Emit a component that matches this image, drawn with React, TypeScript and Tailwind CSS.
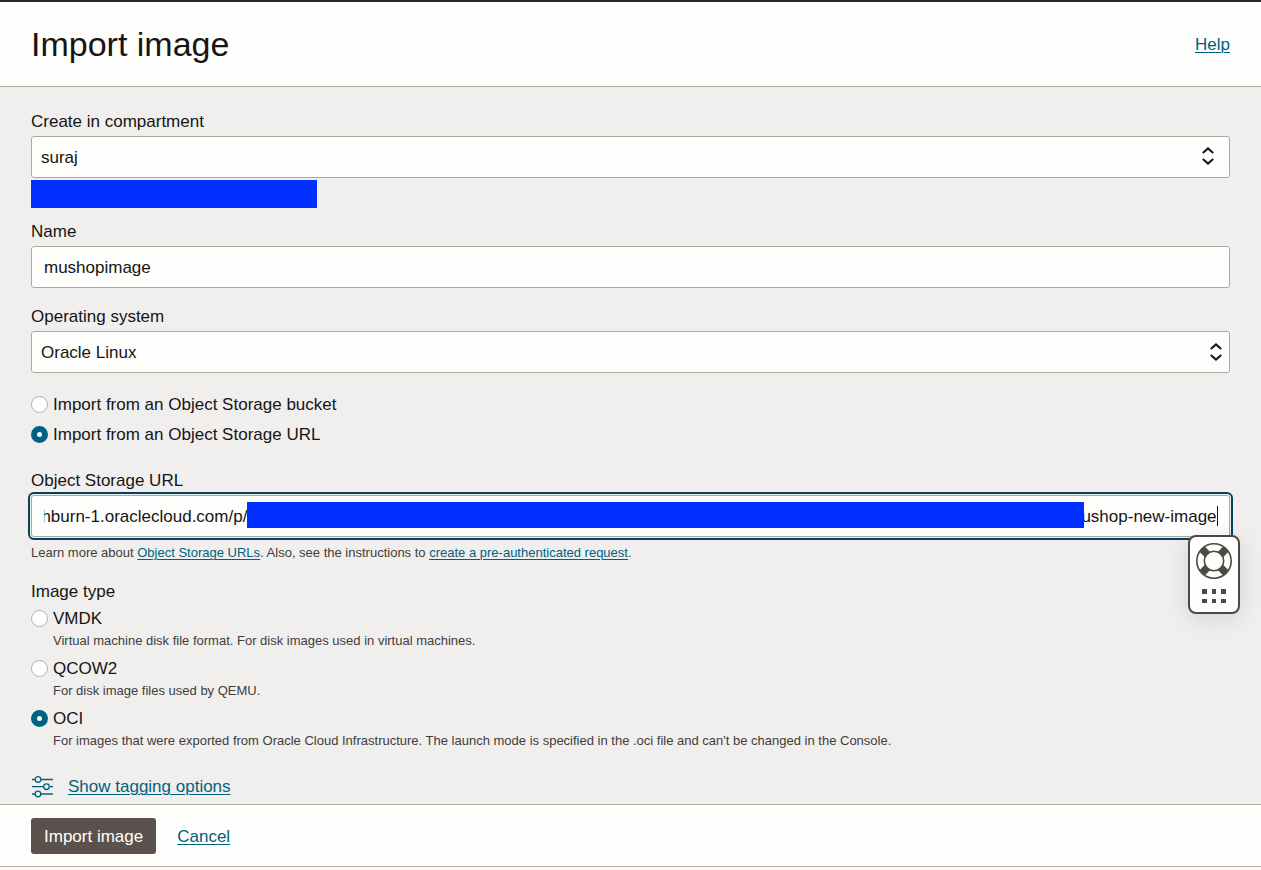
import { useLayoutEffect, useRef, useState } from "react";
import type { ReactNode } from "react";

const label = "block text-[17px] leading-[22px]";
const box =
  "block h-[42px] w-full rounded-[3px] border border-[#aea8a3] bg-[#fefefc] pt-[2px] text-[17px] text-[#161513] outline-none";
const link = "text-[#00617f] underline decoration-1 underline-offset-2";

const OBJECT_URL =
  "https://objectstorage.us-ashburn-1.oraclecloud.com/p/000xxxxxxxxxxxxxxxxxxxxxxxxxxxxxxxxxxxxxxxxxxxxxxxxxxxxxxxxxxxxxxxxxxxxxx/n/xxxxxxxxxx/b/images/o/mushop-new-image";

function Chevrons({ className }: { className: string }) {
  return (
    <svg
      className={`pointer-events-none absolute ${className}`}
      viewBox="0 0 12 18"
      fill="none"
      stroke="#161513"
      strokeWidth="2"
      aria-hidden="true"
    >
      <path d="M0.8 6 L6 1.4 L11.2 6 M0.8 12 L6 16.6 L11.2 12" />
    </svg>
  );
}

type RadioProps = {
  name: string;
  text: string;
  checked: boolean;
  onSelect: () => void;
  hint?: ReactNode;
};

function Radio({ name, text, checked, onSelect, hint }: RadioProps) {
  return (
    <div>
      <label className="flex w-fit items-start gap-[5px] text-[17px] leading-[22px]">
        <input
          type="radio"
          name={name}
          checked={checked}
          onChange={onSelect}
          className="mt-[2px] size-[17px] shrink-0 appearance-none rounded-full border border-[#b5afab] bg-[#fefefc] checked:border-[6px] checked:border-[#006182]"
        />
        {text}
      </label>
      {hint && <p className="ml-[22px] text-[13px] leading-[22px] text-[#403d3a]">{hint}</p>}
    </div>
  );
}

function SupportWidget() {
  return (
    <button
      type="button"
      aria-label="Support"
      className="absolute top-10 -right-[10px] flex h-[79px] w-[52px] flex-col items-center rounded-lg border-2 border-[#4d4845] bg-[#fefefc] pt-[6px] shadow-[0_4px_24px_rgba(0,0,0,0.12)]"
    >
      <svg width="36" height="36" viewBox="0 0 36 36" fill="none" stroke="#4d4845" aria-hidden="true">
        <path
          d="M11.3 11.3L6.2 6.2M24.7 11.3L29.8 6.2M11.3 24.7L6.2 29.8M24.7 24.7L29.8 29.8"
          strokeWidth="7.5"
        />
        <circle cx="18" cy="18" r="17.2" strokeWidth="1.6" />
        <circle cx="18" cy="18" r="9.7" strokeWidth="1.6" fill="#fefefc" />
      </svg>
      <svg className="mt-[10px]" width="24" height="15" viewBox="0 0 24 15" fill="#4d4845" aria-hidden="true">
        <path d="M0 0h5v5H0zM10 0h4v5h-4zM19 0h5v5h-5zM0 10h5v4H0zM10 10h4v4h-4zM19 10h5v4h-5z" />
      </svg>
    </button>
  );
}

export default function App() {
  const [source, setSource] = useState("url");
  const [imageType, setImageType] = useState("oci");
  const [name, setName] = useState("mushopimage");
  const [url, setUrl] = useState(OBJECT_URL);
  const urlRef = useRef<HTMLInputElement>(null);

  useLayoutEffect(() => {
    const el = urlRef.current;
    if (el) el.scrollLeft = el.scrollWidth;
  }, []);

  return (
    <div className="flex min-h-screen flex-col border-t-2 border-[#2c2624] bg-[#fcf9f7] font-['Liberation_Sans',Arial,sans-serif] text-[#161513]">
      <header className="flex items-center justify-between border-b border-[#b3ada6] bg-[#fefefc] px-[31px] py-[22px]">
        <h1 className="text-[34px] leading-10">Import image</h1>
        <a href="#help" className={`pt-[2px] text-[17px] leading-[22px] ${link}`}>
          Help
        </a>
      </header>

      <main className="flex-1 bg-[#f1efee] px-[31px] pt-6 pb-[6px]">
        <label htmlFor="compartment" className={label}>
          Create in compartment
        </label>
        <div className="relative mt-[3px]">
          <select id="compartment" className={`${box} appearance-none pl-[9px]`}>
            <option>suraj</option>
          </select>
          <Chevrons className="top-[11px] right-4 h-[18px] w-3" />
        </div>
        <div className="mt-[2px] h-7 w-[286px] bg-[#002fff]" />

        <label htmlFor="name" className={`${label} mt-[13px]`}>
          Name
        </label>
        <input
          id="name"
          type="text"
          value={name}
          onChange={(e) => setName(e.target.value)}
          className={`${box} mt-[3px] px-3`}
        />

        <label htmlFor="os" className={`${label} mt-[18px]`}>
          Operating system
        </label>
        <div className="relative mt-[3px]">
          <select id="os" className={`${box} appearance-none pl-[9px]`}>
            <option>Oracle Linux</option>
          </select>
          <Chevrons className="top-3 right-2 h-[18px] w-3" />
        </div>

        <div className="mt-[21px] flex flex-col gap-2">
          <Radio
            name="source"
            text="Import from an Object Storage bucket"
            checked={source === "bucket"}
            onSelect={() => setSource("bucket")}
          />
          <Radio
            name="source"
            text="Import from an Object Storage URL"
            checked={source === "url"}
            onSelect={() => setSource("url")}
          />
        </div>

        <label htmlFor="url" className={`${label} mt-6`}>
          Object Storage URL
        </label>
        <div className="relative mt-[3px] rounded-[3px] outline-2 outline-offset-1 outline-[#00445c]">
          <input
            id="url"
            ref={urlRef}
            type="text"
            value={url}
            onChange={(e) => setUrl(e.target.value)}
            className={`${box} px-3`}
          />
          <div className="absolute top-[7px] right-[146px] left-[216px] h-[26px] bg-[#002fff]" />
          <div className="absolute top-[11px] right-3 h-5 w-px bg-[#161513]" />
          <SupportWidget />
        </div>
        <p className="mt-[5px] text-[13px] leading-[22px] text-[#403d3a]">
          Learn more about{" "}
          <a href="#urls" className={link}>
            Object Storage URLs
          </a>
          . Also, see the instructions to{" "}
          <a href="#request" className={link}>
            create a pre-authenticated request
          </a>
          .
        </p>

        <fieldset className="mt-[17px]">
          <legend className="text-[17px] leading-[22px]">Image type</legend>
          <div className="mt-[5px] flex flex-col gap-[6px]">
            <Radio
              name="imageType"
              text="VMDK"
              checked={imageType === "vmdk"}
              onSelect={() => setImageType("vmdk")}
              hint="Virtual machine disk file format. For disk images used in virtual machines."
            />
            <Radio
              name="imageType"
              text="QCOW2"
              checked={imageType === "qcow2"}
              onSelect={() => setImageType("qcow2")}
              hint="For disk image files used by QEMU."
            />
            <Radio
              name="imageType"
              text="OCI"
              checked={imageType === "oci"}
              onSelect={() => setImageType("oci")}
              hint="For images that were exported from Oracle Cloud Infrastructure. The launch mode is specified in the .oci file and can't be changed in the Console."
            />
          </div>
        </fieldset>

        <div className="mt-6 flex h-[22px] items-center gap-[15px]">
          <svg width="22" height="22" viewBox="0 0 22 22" fill="none" stroke="#00617f" strokeWidth="1.3" aria-hidden="true">
            <path d="M1 3.5h3M10 3.5h12M1 10.7h11M19 10.7h3M1 18h3M10 18h12" />
            <circle cx="7" cy="3.5" r="2.8" />
            <circle cx="15.5" cy="10.7" r="2.8" />
            <circle cx="7" cy="18" r="2.8" />
          </svg>
          <a href="#tags" className={`text-[17px] leading-[22px] ${link}`}>
            Show tagging options
          </a>
        </div>
      </main>

      <footer className="mb-[3px] flex items-center gap-[21px] border-y border-[#b3ada6] bg-[#fefefc] px-[31px] pt-[13px] pb-3">
        <button type="button" className="h-9 rounded-[3px] bg-[#5b524e] px-[13px] pt-[2px] text-[17px] leading-[22px] text-white">
          Import image
        </button>
        <a href="#cancel" className={`pt-[2px] text-[17px] leading-[22px] ${link}`}>
          Cancel
        </a>
      </footer>
    </div>
  );
}
